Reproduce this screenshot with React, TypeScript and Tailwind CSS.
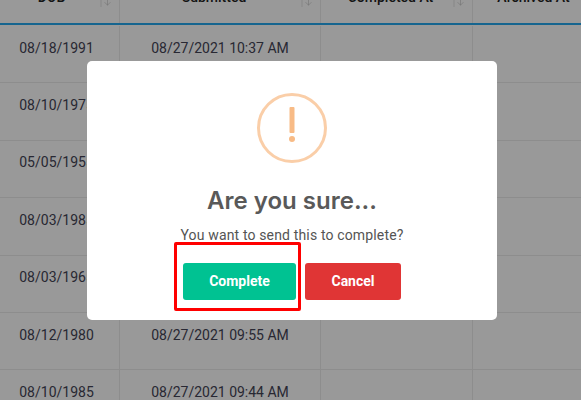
import React from 'react';
import { ArrowDown } from 'lucide-react';

const headers = [
  { label: 'DOB', pad: 'pr-[16px]' },
  { label: 'Submitted', pad: 'pr-[12px]' },
  { label: 'Completed At', pad: 'pr-[12px]' },
  { label: 'Archived At', pad: 'pr-[30px]' },
];

const rows = [
  { dob: '08/18/1991', submitted: '08/27/2021 10:37 AM' },
  { dob: '08/10/1975', submitted: '08/27/2021 10:30 AM' },
  { dob: '05/05/1955', submitted: '08/27/2021 10:24 AM' },
  { dob: '08/03/1985', submitted: '08/27/2021 10:18 AM' },
  { dob: '08/03/1965', submitted: '08/27/2021 10:02 AM' },
  { dob: '08/12/1980', submitted: '08/27/2021 09:55 AM' },
  { dob: '08/10/1985', submitted: '08/27/2021 09:44 AM' },
];

const gridCols = 'grid grid-cols-[120px_201px_152px_152px]';

export default function App() {
  return (
    <div className="relative h-[400px] w-full overflow-hidden bg-white font-['Roboto',sans-serif]">
      {/* Table, scrolled so the header is cut off */}
      <div className="-mt-[21px]">
        <div className={`${gridCols} h-[46px] border-b-2 border-[#25a8ee]`}>
          {headers.map(h => (
            <div key={h.label} className={`relative flex items-center justify-center border-r border-[#ebebeb] pb-[8px] text-[14px] font-medium text-[#222222] ${h.pad}`}>
              {h.label}
              <span className="absolute right-[7px] top-[14px] flex items-start gap-px text-[#bbbbbb]">
                <span className="h-[14px] w-[2px] bg-[#f0f0f0]" />
                <ArrowDown className="mt-[5px] h-[9px] w-[9px]" strokeWidth={1.5} />
              </span>
            </div>
          ))}
        </div>
        <div className="pt-px">
          {rows.map(row => (
            <div key={row.dob + row.submitted} className={`${gridCols} h-[57.4px] border-b border-[#ebebeb] text-[14px] text-[#444455]`}>
              <div className="flex items-center justify-center border-r border-[#ebebeb] pb-[12px] pr-[6px]">{row.dob}</div>
              <div className="flex items-center justify-center border-r border-[#ebebeb] pb-[12px]">{row.submitted}</div>
              <div className="border-r border-[#ebebeb]" />
              <div />
            </div>
          ))}
        </div>
      </div>

      {/* Modal overlay */}
      <div className="absolute inset-0 bg-black/40 pl-[87px] pt-[61px]">
        <div className="relative flex h-[259px] w-[410px] flex-col items-center rounded-[5px] bg-white pt-[32px]">
          <div className="flex h-[70px] w-[70px] items-center justify-center rounded-full border-[3px] border-[#facea8] pb-[7px]">
            <svg width="10" height="35" viewBox="0 0 10 35">
              <rect x="2.5" y="0" width="5" height="26" rx="1" fill="#f8bb86" />
              <circle cx="5" cy="32" r="3" fill="#f8bb86" />
            </svg>
          </div>
          <h2 className="mt-[21px] font-['Inter',sans-serif] text-[24px] leading-[34px] font-semibold text-[#595959]">Are you sure...</h2>
          <p className="mt-[7px] text-[14px] leading-[20px] tracking-[0.15px] text-[#545454]">You want to send this to complete?</p>
          <div className="mt-[18px] flex gap-[9px]">
            <button className="h-[37px] w-[113px] rounded-[3px] bg-[#00c292] text-[14px] font-bold text-white">Complete</button>
            <button className="h-[37px] w-[96px] rounded-[3px] bg-[#e03535] text-[14px] font-bold text-white">Cancel</button>
          </div>
          {/* Red annotation box */}
          <div className="absolute left-[87px] top-[181px] h-[69px] w-[127px] rounded-[2px] border-[3px] border-[#ff0000]" />
        </div>
      </div>
    </div>
  );
}
